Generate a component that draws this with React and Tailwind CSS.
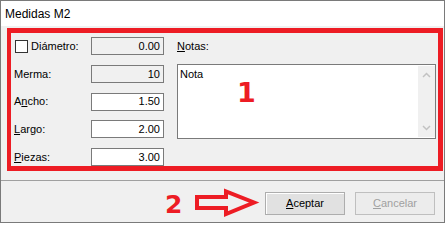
import React from "react";

function Field({ value, disabled }) {
  return (
    <div
      className={`w-[73px] h-[18px] border border-[#7a7a7a] flex items-center justify-end pr-[3px] text-[11px] text-black ${
        disabled ? "bg-[#f0f0f0]" : "bg-white"
      }`}
    >
      {value}
    </div>
  );
}

function Row({ label, children, value, disabled }) {
  return (
    <div className="flex items-center h-[18px]">
      <div className="w-[77px] flex items-center text-[11px] text-black">{label}</div>
      <Field value={value} disabled={disabled} />
    </div>
  );
}

function U({ children }) {
  return <span className="underline underline-offset-[1px] decoration-1">{children}</span>;
}

export default function App() {
  return (
    <div className="w-[446px] h-[224px] bg-white relative font-['Liberation_Sans',Arial,sans-serif] overflow-hidden">
      <div className="w-[445px] h-[223px] border border-[#7a7a7a] bg-[#f0f0f0] flex flex-col">
        {/* title bar */}
        <div className="h-[25px] bg-white pl-[4px] flex items-center text-[12px] text-black">
          Medidas M2
        </div>

        {/* body */}
        <div className="flex flex-col">
          <div className="mt-[2px] ml-[6px] w-[436px] h-[143px] border-[5px] border-l-4 border-[#ed1c24] flex">
            {/* left column */}
            <div className="pl-[3px] pt-[4px] flex flex-col gap-[9.75px]">
              <div className="flex items-center h-[18px]">
                <div className="w-[77px] flex items-center text-[11px] text-black">
                  <span className="ml-[1px] w-[13px] h-[13px] border border-[#333] bg-white" />
                  <span className="ml-[3px]">Diámetro:</span>
                </div>
                <Field value="0.00" disabled />
              </div>
              <Row label="Merma:" value="10" disabled />
              <Row
                label={
                  <span>
                    A<U>n</U>cho:
                  </span>
                }
                value="1.50"
              />
              <Row
                label={
                  <span>
                    <U>L</U>argo:
                  </span>
                }
                value="2.00"
              />
              <Row
                label={
                  <span>
                    <U>P</U>iezas:
                  </span>
                }
                value="3.00"
              />
            </div>

            {/* right column */}
            <div className="ml-[13px] pt-[4px] flex flex-col w-[259px]">
              <div className="h-[18px] flex items-center text-[11px] text-black">
                <span>
                  <U>N</U>otas:
                </span>
              </div>
              <div className="mt-[9px] h-[75px] w-[259px] border border-[#7a7a7a] bg-white flex">
                <div className="flex-1 pl-[2px] pt-[1px] text-[11px] text-black">Nota</div>
                <div className="w-[17px] my-[1px] bg-[#f0f0f0] flex flex-col justify-between items-center py-[6px]">
                  <svg width="9" height="6" viewBox="0 0 9 6">
                    <path d="M1 5 L4.5 1.5 L8 5" fill="none" stroke="#c2c2c2" strokeWidth="1.5" />
                  </svg>
                  <svg width="9" height="6" viewBox="0 0 9 6">
                    <path d="M1 1 L4.5 4.5 L8 1" fill="none" stroke="#c2c2c2" strokeWidth="1.5" />
                  </svg>
                </div>
              </div>
            </div>
          </div>

          {/* separator */}
          <div className="mt-[9px] h-px bg-[#a0a0a0]" />

          {/* buttons */}
          <div className="mt-[11px] flex justify-end gap-[10px] pr-[9px]">
            <button className="w-[80px] h-[23px] border border-[#adadad] bg-[#e1e1e1] shadow-[inset_1px_1px_0_#ffffff] text-[11px] text-black flex items-center justify-center">
              <span>
                <U>A</U>ceptar
              </span>
            </button>
            <button className="w-[80px] h-[23px] border border-[#bfbfbf] bg-[#ececec] text-[11px] text-[#a0a0a0] flex items-center justify-center">
              <span>
                <U>C</U>ancelar
              </span>
            </button>
          </div>
        </div>
      </div>

      {/* annotation overlays */}
      <div className="absolute left-[237px] top-[79px] text-[27px] leading-none font-bold text-[#ed1c24] font-['DejaVu_Sans',sans-serif]">
        1
      </div>
      <div className="absolute left-[165px] top-[192px] text-[25px] leading-none font-bold text-[#ed1c24] font-['DejaVu_Sans',sans-serif]">
        2
      </div>
      <svg
        className="absolute left-[190px] top-[185px]"
        width="72"
        height="36"
        viewBox="0 0 72 36"
      >
        <polygon
          points="7,12 36,12 36,6.5 64,17.5 36,29 36,23 7,23"
          fill="none"
          stroke="#ed1c24"
          strokeWidth="4"
          strokeLinejoin="miter"
        />
      </svg>
    </div>
  );
}
